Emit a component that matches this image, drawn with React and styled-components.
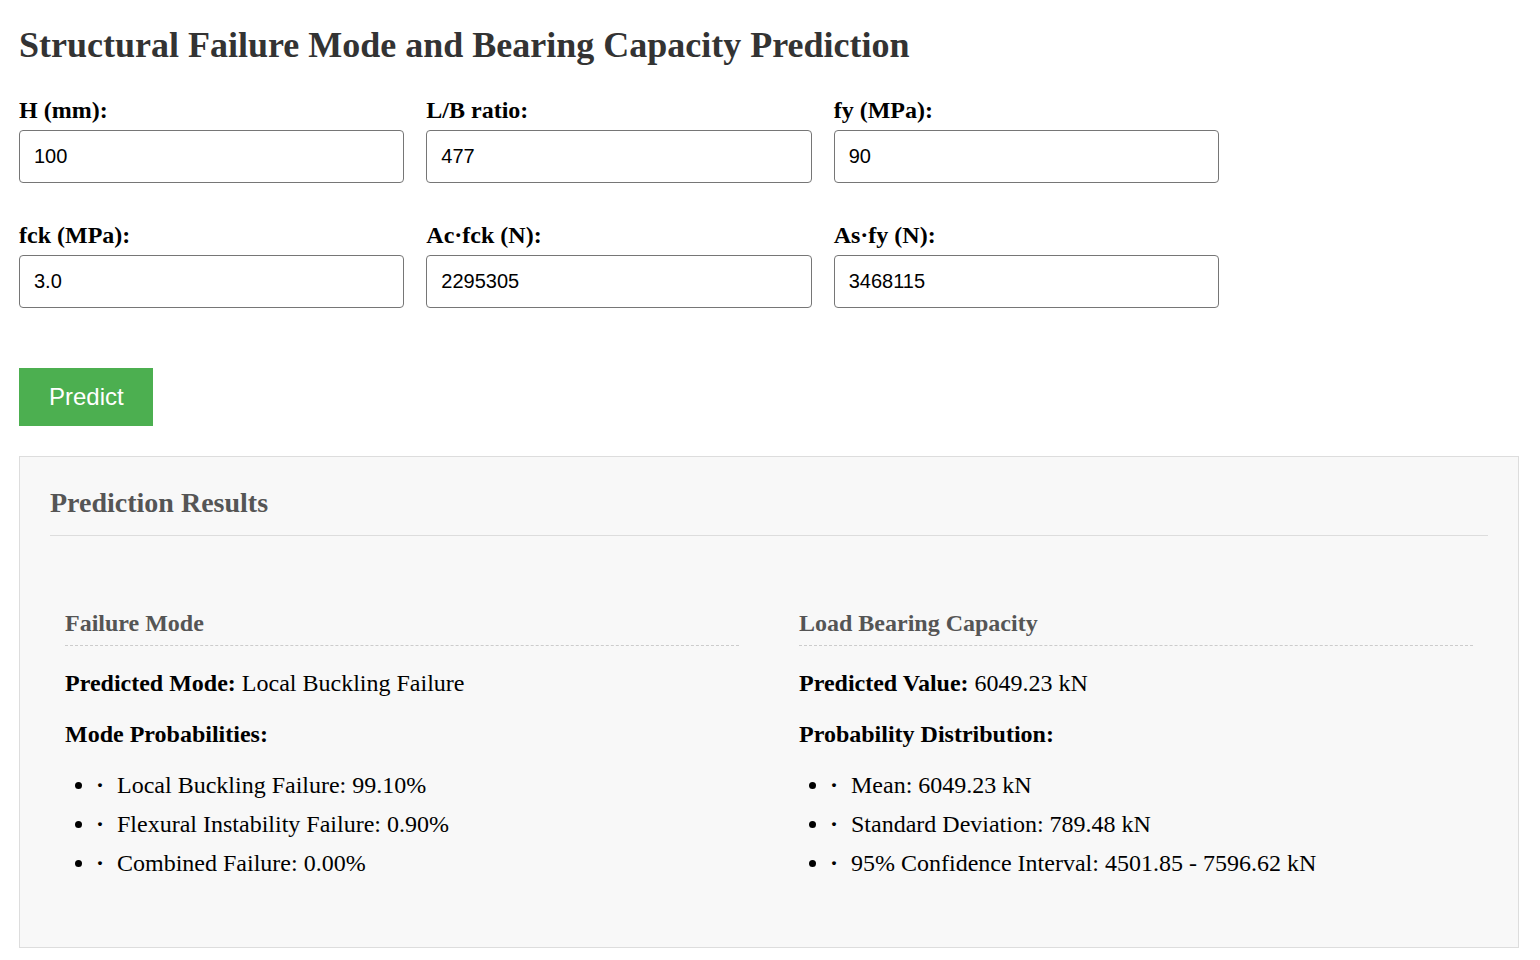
import React, { useState } from 'react'
import styled, { createGlobalStyle } from 'styled-components'

const GlobalStyle = createGlobalStyle`
  body {
    margin: 0;
    background: #fff;
    font-family: "Liberation Serif", "Times New Roman", serif;
    font-size: 24px;
    color: #000;
  }
`

const Page = styled.div`
  padding: 20px 21px 20px 19px;
`

const Title = styled.h1`
  margin: 4px 0 31px;
  font-size: 36px;
  font-weight: bold;
  color: #333;
`

const FormGrid = styled.div`
  display: grid;
  grid-template-columns: repeat(3, 1fr);
  column-gap: 22px;
  row-gap: 39.4px;
  width: 1200px;
`

const Field = styled.div`
  display: flex;
  flex-direction: column;
`

const Label = styled.label`
  font-weight: bold;
  margin-bottom: 6px;
`

const Input = styled.input`
  box-sizing: border-box;
  height: 53px;
  padding: 0 14px;
  font-family: "Liberation Sans", Arial, sans-serif;
  font-size: 20px;
  color: #000;
  border: 1px solid #767676;
  border-radius: 4px;
  background: #fff;
  outline: none;
`

const Button = styled.button`
  margin-top: 60px;
  padding: 15px 30px;
  width: 134px;
  height: 58px;
  font-family: "Liberation Sans", Arial, sans-serif;
  font-size: 24px;
  color: #fff;
  background: #4caf50;
  border: none;
  cursor: pointer;
`

const Results = styled.div`
  margin-top: 30px;
  padding: 30px 30px 31px;
  background: #f8f8f8;
  border: 1px solid #ddd;
`

const ResultsTitle = styled.h2`
  margin: 0 0 59px;
  padding-bottom: 16px;
  font-size: 28px;
  color: #555;
  border-bottom: 1px solid #ddd;
`

const Columns = styled.div`
  display: grid;
  grid-template-columns: 1fr 1fr;
  gap: 30px;
`

const Card = styled.div`
  padding: 15px;
`

const CardTitle = styled.h3`
  margin: 0;
  padding-bottom: 8px;
  font-size: 24px;
  color: #555;
  border-bottom: 1px dashed #ccc;
`

const Line = styled.p`
  margin: 24px 0;
`

const List = styled.ul`
  margin: 24px 0;
  padding-left: 31px;
  list-style: disc;
`

const Item = styled.li`
  margin-bottom: 12px;
  &:last-child { margin-bottom: 0; }
`

const Dot = styled.span`
  display: inline-block;
  width: 21px;
  font-weight: bold;
`

const fields = [
  ['H (mm):', '100'],
  ['L/B ratio:', '477'],
  ['fy (MPa):', '90'],
  ['fck (MPa):', '3.0'],
  ['Ac·fck (N):', '2295305'],
  ['As·fy (N):', '3468115'],
]

function App() {
  const [values, setValues] = useState(fields.map((f) => f[1]))
  const modes = [
    'Local Buckling Failure: 99.10%',
    'Flexural Instability Failure: 0.90%',
    'Combined Failure: 0.00%',
  ]
  const dist = [
    'Mean: 6049.23 kN',
    'Standard Deviation: 789.48 kN',
    '95% Confidence Interval: 4501.85 - 7596.62 kN',
  ]
  return (
    <Page>
      <GlobalStyle />
      <Title>Structural Failure Mode and Bearing Capacity Prediction</Title>
      <FormGrid>
        {fields.map(([label], i) => (
          <Field key={label}>
            <Label>{label}</Label>
            <Input
              value={values[i]}
              onChange={(e) => {
                const next = [...values]
                next[i] = e.target.value
                setValues(next)
              }}
            />
          </Field>
        ))}
      </FormGrid>
      <Button>Predict</Button>
      <Results>
        <ResultsTitle>Prediction Results</ResultsTitle>
        <Columns>
          <Card>
            <CardTitle>Failure Mode</CardTitle>
            <Line><b>Predicted Mode:</b> Local Buckling Failure</Line>
            <Line><b>Mode Probabilities:</b></Line>
            <List>
              {modes.map((m) => (
                <Item key={m}><Dot>·</Dot>{m}</Item>
              ))}
            </List>
          </Card>
          <Card>
            <CardTitle>Load Bearing Capacity</CardTitle>
            <Line><b>Predicted Value:</b> 6049.23 kN</Line>
            <Line><b>Probability Distribution:</b></Line>
            <List>
              {dist.map((m) => (
                <Item key={m}><Dot>·</Dot>{m}</Item>
              ))}
            </List>
          </Card>
        </Columns>
      </Results>
    </Page>
  )
}

export default App
